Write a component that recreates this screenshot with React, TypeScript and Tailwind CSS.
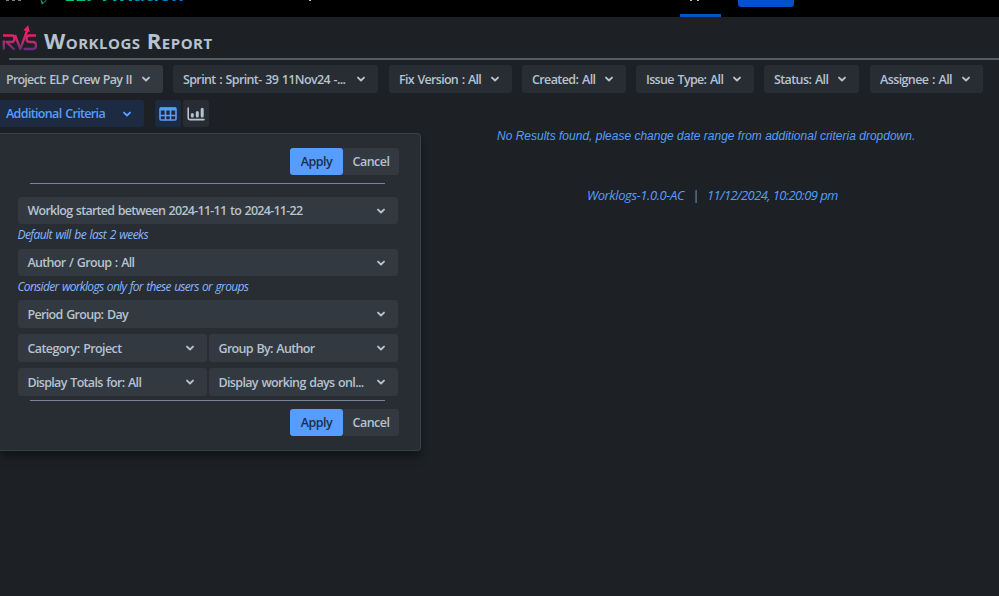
import React from 'react';
import clsx from 'clsx';

interface DropdownProps {
  label: string;
  className?: string;
  textClass?: string;
}

const filters = [
  { label: 'Project: ELP Crew Pay II', box: 'w-[162.5px] mr-[10.5px] pl-1.5 pr-3 bg-[#323940] rounded-l-none', text: 'tracking-[-0.78px]' },
  { label: 'Sprint : Sprint- 39 11Nov24 -...', box: 'w-[205px] mr-[11px] pl-2.5 pr-3 bg-[#282d33]', text: 'tracking-[-0.64px]' },
  { label: 'Fix Version : All', box: 'w-[123px] mr-[10px] pl-2.5 pr-3 bg-[#282d33]', text: 'tracking-[-0.7px]' },
  { label: 'Created: All', box: 'w-[104px] mr-[10px] pl-2.5 pr-3 bg-[#282d33]', text: 'tracking-[-0.6px]' },
  { label: 'Issue Type: All', box: 'w-[118px] mr-[10px] pl-2.5 pr-3 bg-[#282d33]', text: 'tracking-[-0.65px]' },
  { label: 'Status: All', box: 'w-[95px] mr-[11px] pl-2.5 pr-3 bg-[#282d33]', text: 'tracking-[-0.6px]' },
  { label: 'Assignee : All', box: 'w-[113px] pl-2.5 pr-3 bg-[#282d33]', text: 'tracking-[-0.6px]' },
];

const Chevron = () => (
  <svg viewBox="0 0 10 10" className="w-2.5 h-2.5 shrink-0" fill="none" stroke="currentColor" strokeWidth="1.9" strokeLinecap="round" strokeLinejoin="round">
    <path d="M2 3.6 L5 6.5 L8 3.6" />
  </svg>
);

const Dropdown: React.FC<DropdownProps> = ({ label, className, textClass }) => (
  <button className={clsx('flex items-center justify-between shrink-0 rounded-[3px] font-semibold text-[12.5px] [word-spacing:1px] whitespace-nowrap', className)}>
    <span className={clsx('pt-0.5 text-left', textClass)}>{label}</span>
    <Chevron />
  </button>
);

const Actions = () => (
  <div className="flex justify-end pr-[21px] text-[12.5px] font-semibold tracking-[-0.5px]">
    <button className="w-[53px] h-[27px] pt-0.5 rounded-[3px] bg-[#579dff] text-[#1d2f4a]">Apply</button>
    <button className="w-[56px] h-[27px] pt-0.5 rounded-r-[3px] bg-[#323940]">Cancel</button>
  </div>
);

const Logo = () => (
  <svg viewBox="0 0 36 28" className="w-9 h-7" fill="none" strokeWidth="2.3" strokeLinejoin="round">
    <defs>
      <linearGradient id="rvs" gradientUnits="userSpaceOnUse" x1="0" y1="8" x2="0" y2="26">
        <stop offset="0" stopColor="#ee1f63" />
        <stop offset="0.45" stopColor="#c4286e" />
        <stop offset="1" stopColor="#54307f" />
      </linearGradient>
    </defs>
    <g stroke="url(#rvs)">
      <path d="M1.8 24.8 V15.5 M1 10.5 H9.5 Q12.5 10.5 12.5 13.7 Q12.5 17 9.5 17 H4.5 L12.5 24.8" />
      <path d="M13 10 L18.3 24 L25.3 5" />
      <path d="M34 10.5 H27.5 Q24.5 10.5 24.5 13.7 Q24.5 17 27.5 17 H31 Q34 17 34 20.5 Q34 24 31 24 H21.5" />
    </g>
    <path d="M21.3 5.2 L26.2 0.3 L27.8 7 Z" fill="#ee1f63" />
  </svg>
);

const App: React.FC = () => {
  return (
    <div className="w-full h-[596px] overflow-hidden bg-[#1d2125] text-[#b6c2cf] font-['Open_Sans','Noto_Sans',sans-serif]">
      {/* Bottom edge of the site navigation */}
      <header className="relative h-[17px] bg-black overflow-hidden">
        <div className="absolute left-1.5 top-0 flex gap-[3px]">
          <span className="w-[3px] h-px bg-[#7b8087]" />
          <span className="w-[3px] h-px bg-[#7b8087]" />
          <span className="w-[3px] h-px bg-[#7b8087]" />
        </div>
        <svg viewBox="0 0 10 8" className="absolute left-10 top-0 w-2.5 h-2" fill="none" stroke="#14a085" strokeWidth="1">
          <path d="M1 0 L2.2 4 L6.5 0 M2.2 4 L2.4 1.5" />
        </svg>
        <div className="absolute left-16 -top-4 text-[20px] leading-[20px] tracking-[-0.35px] font-bold bg-gradient-to-r from-[#00c96b] via-[#00a5b5] to-[#0873d8] bg-clip-text text-transparent">
          ELP Aviation
        </div>
        <div className="absolute left-[309px] top-0 w-0.5 h-px bg-[#b6c2cf]" />
        <div className="absolute left-[690px] top-0 w-0.5 h-px bg-[#b6c2cf]" />
        <div className="absolute left-[697px] top-0 w-0.5 h-px bg-[#b6c2cf]" />
        <div className="absolute left-[680px] bottom-0 w-[41px] h-[3px] bg-[#0055cc]" />
        <div className="absolute left-[738px] top-0 w-14 h-[7px] rounded-b-[3px] bg-[#0052cc]" />
      </header>

      <div className="flex h-[41px] pt-2 pl-0.5">
        <Logo />
        <h1 className="ml-1.5 mt-px text-[22px] leading-7 tracking-[0.5px] font-bold [font-variant:small-caps] whitespace-nowrap">Worklogs Report</h1>
      </div>
      <div className="ml-[9px] h-0.5 bg-[#535d66]" />

      <div className="flex mt-[5px]">
        {filters.map((filter) => (
          <Dropdown key={filter.label} label={filter.label} className={clsx('h-7', filter.box)} textClass={filter.text} />
        ))}
      </div>

      <div className="flex mt-[7px]">
        <Dropdown label="Additional Criteria" className="w-36 h-[27px] mr-[11px] pl-1.5 pr-3 rounded-l-none bg-[#1c2b41] text-[#579dff]" textClass="tracking-[-0.65px]" />
        <button className="flex items-center justify-center w-[26px] h-[27px] mr-0.5 rounded-[3px] bg-[#1c2b41]">
          <svg viewBox="0 0 18 14" className="w-[18px] h-3.5" fill="none" stroke="#579dff" strokeWidth="1.6">
            <rect x="1" y="1" width="16" height="12" rx="1" />
            <path d="M1 2 H17" strokeWidth="3" />
            <path d="M1 8.5 H17 M6.5 2 V13 M11.5 2 V13" />
          </svg>
        </button>
        <button className="flex items-center justify-center w-[26px] h-[27px] rounded-[3px] bg-[#282d33]">
          <svg viewBox="0 0 18 14" className="w-[18px] h-3.5" fill="none" stroke="#b6c2cf" strokeLinecap="round">
            <path d="M1.2 1 V11 Q1.2 12.6 2.8 12.6 H17" strokeWidth="1.6" />
            <path d="M5.3 7.5 V9 M10.3 5.5 V9 M15.2 2.3 V9" strokeWidth="3" />
          </svg>
        </button>
      </div>

      <main className="flex mt-1.5">
        <section className="w-[421px] h-[318px] shrink-0 pt-3.5 border border-l-0 border-[#384148] rounded-r-[4px] bg-[#282d33] shadow-[0_6px_10px_rgba(0,0,0,0.4)]">
          <Actions />
          <div className="ml-[30px] w-[355px] mt-2 h-px bg-[#738496]" />
          <div className="ml-[17.5px] w-[380px] mt-[13px] tracking-[-0.68px]">
            <Dropdown label="Worklog started between 2024-11-11 to 2024-11-22" className="w-full h-[27px] pl-2.5 pr-3 bg-[#323940]" textClass="tracking-[-0.74px]" />
            <p className="h-[25px] leading-[22px] text-[12px] tracking-[-0.58px] [word-spacing:1px] italic text-[#85b8ff]">Default will be last 2 weeks</p>
            <Dropdown label="Author / Group : All" className="w-full h-[27px] pl-2.5 pr-3 bg-[#323940]" />
            <p className="h-6 leading-[22px] text-[12px] tracking-[-0.7px] [word-spacing:1px] italic text-[#85b8ff]">Consider worklogs only for these users or groups</p>
            <div className="grid grid-cols-2 gap-x-0.5 gap-y-1.5">
              <Dropdown label="Period Group: Day" className="col-span-2 h-7 pl-2.5 pr-3 bg-[#323940]" />
              <Dropdown label="Category: Project" className="h-7 pl-2.5 pr-3 bg-[#323940]" textClass="tracking-[-0.6px]" />
              <Dropdown label="Group By: Author" className="h-7 pl-2.5 pr-3 bg-[#323940]" />
              <Dropdown label="Display Totals for: All" className="h-7 pl-2.5 pr-3 bg-[#323940]" />
              <Dropdown label="Display working days onl..." className="h-7 pl-2.5 pr-3 bg-[#323940]" textClass="tracking-[-0.65px]" />
            </div>
          </div>
          <div className="ml-[30px] w-[355px] mt-1 mb-2 h-px bg-[#738496]" />
          <Actions />
        </section>

        <section className="flex-1 italic text-[#579dff] whitespace-nowrap">
          <p className="ml-[76px] -mt-[7px] text-[12px] leading-5 font-['Liberation_Sans',sans-serif]">
            No Results found, please change date range from additional criteria dropdown.
          </p>
          <p className="ml-[166px] mt-[39px] text-[13px] leading-5 tracking-[-0.4px]">
            <span>Worklogs-1.0.0-AC</span>
            <span className="mx-2">|</span>
            <span className="tracking-[-0.6px]">11/12/2024, 10:20:09 pm</span>
          </p>
        </section>
      </main>
    </div>
  );
};

export default App;
